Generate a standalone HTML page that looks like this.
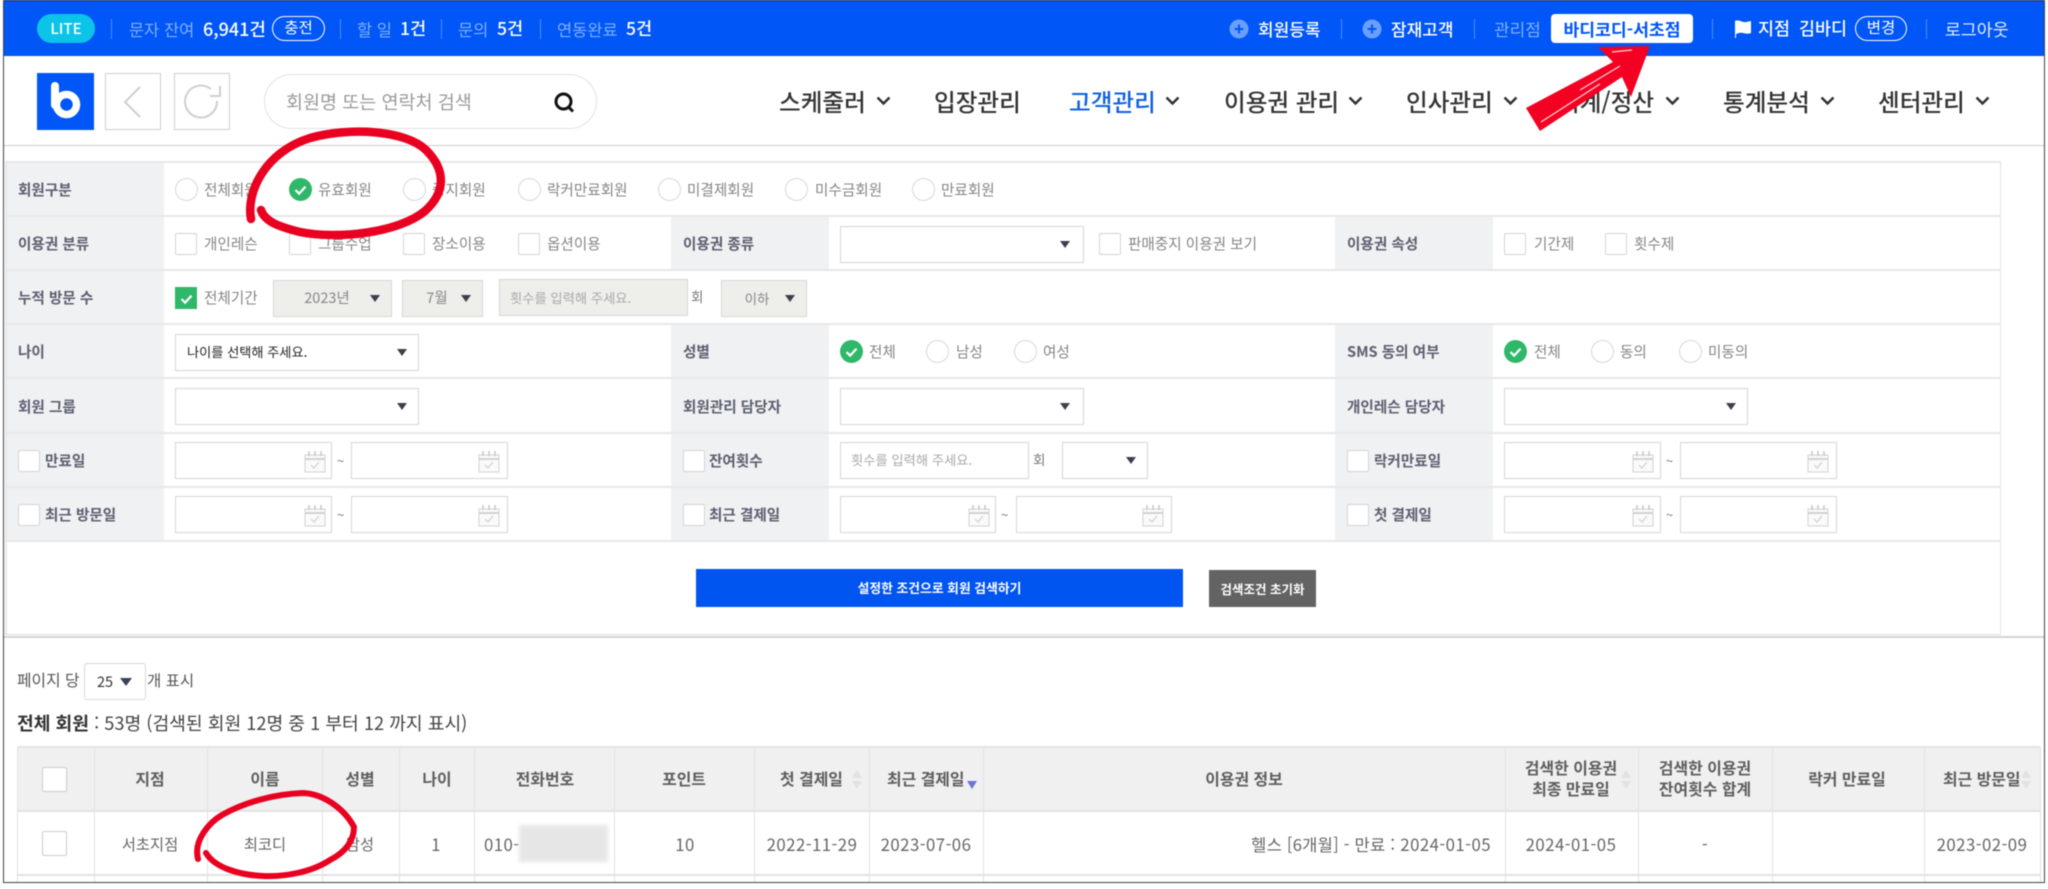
<!DOCTYPE html>
<html lang="ko"><head><meta charset="utf-8"><title>회원 검색</title>
<style>
html,body{margin:0;padding:0;width:2048px;height:889px;overflow:hidden;background:#fff}
*{box-sizing:border-box}
#w{position:absolute;left:0;top:0;width:2048px;height:889px;overflow:hidden;filter:blur(.5px);font-family:"Noto Sans CJK KR","Liberation Sans",sans-serif;color:#666;background:#fff}
#w div,#w span,#w svg{position:absolute}
.t{white-space:nowrap;line-height:24px;margin-top:-12px}
.c{transform:translateX(-50%)}
.bar{font-size:16.5px;color:#7fb0ff}
.wh{color:#fff;font-size:17.6px;font-weight:500}
.sep{width:1px;height:20px;top:19px;background:#4d8cff}
.pill{height:25px;top:16px;border:1.5px solid #fff;border-radius:13px;color:#fff;font-size:15.5px;line-height:21px;text-align:center}
.nav{font-size:23.6px;color:#333;font-weight:500}
.th{background:#f0f1f2}
.hl{height:2px;background:#e8e8e8;left:7px;width:1993px}
.l{font-size:14.6px;font-weight:700;color:#5b5f70;margin-top:-11px}
.v{font-size:14.6px;color:#858585;margin-top:-11px}
.r{width:23px;height:23px;border:1px solid #d8d8d8;border-radius:50%;background:#fff}
.g{width:23px;height:23px;border-radius:50%;background:#2fb869}
.b{width:22px;height:22px;border:1px solid #d4d4d4;border-radius:2px;background:#fff}
.s{height:37px;border:1px solid #d6d6d6;background:#fff}
.d{height:37px;border:1px solid #d6d6d6;background:#eeeeea}
.a{width:0;height:0;border-left:5.5px solid transparent;border-right:5.5px solid transparent;border-top:7px solid #3c404c}
.tv{font-size:15.3px;color:#666}
.th2{font-size:15.9px;font-weight:700;color:#5e5e5e}
.dt{font-size:16.8px;letter-spacing:.45px;color:#666}
.vl{width:1px;background:#e2e2e2;top:747px;height:135px}
.cal{width:22px;height:23px}
.tp{color:#fff;font-size:17px;font-weight:500}
.ch{fill:none;stroke:#333;stroke-width:2.5}
</style></head><body>
<svg width="0" height="0" style="position:absolute"><defs>
<symbol id="cal" viewBox="0 0 22 23"><rect x="1" y="5" width="20" height="17" fill="#fafafa" stroke="#d2d2d2"/><path d="M1 9h20" stroke="#d2d2d2" stroke-width="2"/><path d="M5 1v5M11 1v5M17 1v5" stroke="#c8c8c8" stroke-width="1.5"/><path d="M7 15l3 3 5-6" fill="none" stroke="#d0d0d0" stroke-width="1.2"/></symbol>
<symbol id="ck" viewBox="0 0 23 23"><path d="M6.5 12l3.6 3.6 6.4-7" fill="none" stroke="#fff" stroke-width="2.2"/></symbol>
</defs></svg>
<div id="w">
<!-- top bar -->
<div style="left:3px;top:1px;width:2041px;height:55px;background:#0056f6"></div>
<div style="left:37px;top:14px;width:58px;height:29px;border-radius:15px;background:#0cc4e8;color:#fff;font-size:15px;font-weight:500;line-height:29px;text-align:center">LITE</div>
<div class="sep" style="left:111px"></div>
<span class="t bar" style="left:129px;top:29px">문자 잔여</span>
<span class="t wh" style="left:203px;top:29px;font-size:18px">6,941건</span>
<div class="pill" style="left:272px;width:53px">충전</div>
<div class="sep" style="left:340px"></div>
<span class="t bar" style="left:357px;top:29px">할 일</span>
<span class="t wh" style="left:400px;top:29px">1건</span>
<div class="sep" style="left:441px"></div>
<span class="t bar" style="left:458px;top:29px">문의</span>
<span class="t wh" style="left:497px;top:29px">5건</span>
<div class="sep" style="left:540px"></div>
<span class="t bar" style="left:557px;top:29px">연동완료</span>
<span class="t wh" style="left:626px;top:29px">5건</span>

<svg style="left:1229px;top:19px" width="20" height="20"><circle cx="10" cy="10" r="9.500" fill="#6a9fff"/><path d="M10 5.500v9M5.500 10h9" stroke="#0056f6" stroke-width="2"/></svg>
<span class="t tp" style="left:1258px;top:29px">회원등록</span>
<div class="sep" style="left:1341px"></div>
<svg style="left:1362px;top:19px" width="20" height="20"><circle cx="10" cy="10" r="9.500" fill="#6a9fff"/><path d="M10 5.500v9M5.500 10h9" stroke="#0056f6" stroke-width="2"/></svg>
<span class="t tp" style="left:1391px;top:29px">잠재고객</span>
<div class="sep" style="left:1474px"></div>
<span class="t bar" style="left:1494px;top:29px;font-size:17px">관리점</span>
<div style="left:1551px;top:14px;width:142px;height:29px;background:#fff;border-radius:4px;color:#0056f6;font-size:17.200px;font-weight:700;line-height:29px;text-align:center">바디코디-서초점</div>
<div class="sep" style="left:1712px"></div>
<svg style="left:1734px;top:20px" width="18" height="18"><path d="M1 1C5-1 8 3 12 2l5-1v12c-5 2-8-1-12 0l-3 1v4H1z" fill="#fff"/></svg>
<span class="t tp" style="left:1758px;top:29px;font-size:17.400px">지점</span>
<span class="t tp" style="left:1799px;top:29px;font-size:17.400px">김바디</span>
<div class="pill" style="left:1855px;width:52px">변경</div>
<div class="sep" style="left:1926px"></div>
<span class="t" style="left:1945px;top:29px;color:#fff;font-size:17.300px;opacity:.9">로그아웃</span>

<!-- nav -->
<div style="left:3px;top:145px;width:2041px;height:1px;background:#ccc"></div>
<div style="left:37px;top:73px;width:57px;height:57px;background:#0056f6"></div>
<svg style="left:37px;top:73px" width="57" height="57"><path d="M18 13v19" stroke="#fff" stroke-width="8" stroke-linecap="round"/><circle cx="29.500" cy="31.500" r="10" fill="none" stroke="#fff" stroke-width="7.500"/></svg>
<div style="left:105px;top:73px;width:56px;height:57px;border:1px solid #cfcfcf"></div>
<svg style="left:105px;top:73px" width="56" height="57"><path d="M35 14L20 29l15 15" fill="none" stroke="#cfcfcf" stroke-width="2"/></svg>
<div style="left:174px;top:73px;width:56px;height:57px;border:1px solid #cfcfcf"></div>
<svg style="left:174px;top:73px" width="56" height="57"><path d="M43 28a16 16 0 1 1-6-12" fill="none" stroke="#cfcfcf" stroke-width="2"/><path d="M46 13v10H36" fill="none" stroke="#cfcfcf" stroke-width="2"/></svg>
<div style="left:264px;top:74px;width:333px;height:55px;border:1px solid #e2e2e2;border-radius:28px;background:#fff"></div>
<span class="t" style="left:286px;top:102px;font-size:18.500px;color:#9a9a9a">회원명 또는 연락처 검색</span>
<svg style="left:552px;top:91px" width="24" height="24"><circle cx="11.500" cy="10.500" r="7.500" fill="none" stroke="#111" stroke-width="3"/><path d="M16 15.500l5 5" stroke="#111" stroke-width="3"/></svg>

<span class="t nav" style="left:779px;top:101px">스케줄러</span>
<span class="t nav" style="left:934px;top:101px">입장관리</span>
<span class="t nav" style="left:1069px;top:101px;color:#0f62e0">고객관리</span>
<span class="t nav" style="left:1224px;top:101px">이용권 관리</span>
<span class="t nav" style="left:1406px;top:101px">인사관리</span>
<span class="t nav" style="left:1558px;top:101px">회계/정산</span>
<span class="t nav" style="left:1723px;top:101px">통계분석</span>
<span class="t nav" style="left:1878px;top:101px">센터관리</span>
<svg style="left:876px;top:96px" width="15" height="10"><path class="ch" d="M1.500 1.500L7.500 7.500l6-6"/></svg>
<svg style="left:1165px;top:96px" width="15" height="10"><path class="ch" d="M1.500 1.500L7.500 7.500l6-6"/></svg>
<svg style="left:1348px;top:96px" width="15" height="10"><path class="ch" d="M1.500 1.500L7.500 7.500l6-6"/></svg>
<svg style="left:1503px;top:96px" width="15" height="10"><path class="ch" d="M1.500 1.500L7.500 7.500l6-6"/></svg>
<svg style="left:1665px;top:96px" width="15" height="10"><path class="ch" d="M1.500 1.500L7.500 7.500l6-6"/></svg>
<svg style="left:1820px;top:96px" width="15" height="10"><path class="ch" d="M1.500 1.500L7.500 7.500l6-6"/></svg>
<svg style="left:1975px;top:96px" width="15" height="10"><path class="ch" d="M1.500 1.500L7.500 7.500l6-6"/></svg>

<!-- filter table backgrounds -->
<div class="th" style="left:7px;top:162px;width:157px;height:379px"></div>
<div class="th" style="left:671px;top:216px;width:158px;height:54px"></div>
<div class="th" style="left:1335px;top:216px;width:158px;height:54px"></div>
<div class="th" style="left:671px;top:324px;width:158px;height:217px"></div>
<div class="th" style="left:1335px;top:324px;width:158px;height:217px"></div>
<div class="hl" style="top:161px"></div><div class="hl" style="top:215px"></div><div class="hl" style="top:269px"></div><div class="hl" style="top:323px"></div><div class="hl" style="top:377px"></div><div class="hl" style="top:432px"></div><div class="hl" style="top:486px"></div><div class="hl" style="top:540px"></div>
<div style="left:2000px;top:161px;width:1px;height:473px;background:#e4e4e4"></div>
<div style="left:5px;top:161px;width:2px;height:473px;background:#e8e8e8"></div>
<div style="left:5px;top:634px;width:1996px;height:1px;background:#ddd"></div>
<div style="left:3px;top:636px;width:2041px;height:2px;background:#d2d2d2"></div>

<!-- labels -->
<span class="t l" style="left:18px;top:189px">회원구분</span>
<span class="t l" style="left:18px;top:243px">이용권 분류</span>
<span class="t l" style="left:18px;top:297px">누적 방문 수</span>
<span class="t l" style="left:18px;top:351px">나이</span>
<span class="t l" style="left:18px;top:406px">회원 그룹</span>
<span class="t l" style="left:45px;top:460px">만료일</span>
<span class="t l" style="left:45px;top:514px">최근 방문일</span>
<span class="t l" style="left:683px;top:243px">이용권 종류</span>
<span class="t l" style="left:683px;top:351px">성별</span>
<span class="t l" style="left:683px;top:406px">회원관리 담당자</span>
<span class="t l" style="left:709px;top:460px">잔여횟수</span>
<span class="t l" style="left:709px;top:514px">최근 결제일</span>
<span class="t l" style="left:1347px;top:243px">이용권 속성</span>
<span class="t l" style="left:1347px;top:351px">SMS 동의 여부</span>
<span class="t l" style="left:1347px;top:406px">개인레슨 담당자</span>
<span class="t l" style="left:1374px;top:460px">락커만료일</span>
<span class="t l" style="left:1374px;top:514px">첫 결제일</span>

<!-- row 1 -->
<div class="r" style="left:175px;top:178px"></div><span class="t v" style="left:204px;top:189px">전체회원</span>
<div class="g" style="left:289px;top:178px"></div><svg style="left:289px;top:178px" width="23" height="23"><use href="#ck"/></svg><span class="t v" style="left:318px;top:189px">유효회원</span>
<div class="r" style="left:403px;top:178px"></div><span class="t v" style="left:432px;top:189px">중지회원</span>
<div class="r" style="left:518px;top:178px"></div><span class="t v" style="left:547px;top:189px">락커만료회원</span>
<div class="r" style="left:658px;top:178px"></div><span class="t v" style="left:687px;top:189px">미결제회원</span>
<div class="r" style="left:785px;top:178px"></div><span class="t v" style="left:815px;top:189px">미수금회원</span>
<div class="r" style="left:912px;top:178px"></div><span class="t v" style="left:941px;top:189px">만료회원</span>
<!-- row 2 -->
<div class="b" style="left:175px;top:233px"></div><span class="t v" style="left:204px;top:243px">개인레슨</span>
<div class="b" style="left:289px;top:233px"></div><span class="t v" style="left:318px;top:243px">그룹수업</span>
<div class="b" style="left:403px;top:233px"></div><span class="t v" style="left:432px;top:243px">장소이용</span>
<div class="b" style="left:518px;top:233px"></div><span class="t v" style="left:547px;top:243px">옵션이용</span>
<div class="s" style="left:840px;top:226px;width:244px"></div><div class="a" style="left:1060px;top:241px"></div>
<div class="b" style="left:1099px;top:233px"></div><span class="t v" style="left:1128px;top:243px">판매중지 이용권 보기</span>
<div class="b" style="left:1504px;top:233px"></div><span class="t v" style="left:1534px;top:243px">기간제</span>
<div class="b" style="left:1605px;top:233px"></div><span class="t v" style="left:1634px;top:243px">횟수제</span>
<!-- row 3 -->
<div style="left:175px;top:287px;width:22px;height:22px;background:#2fb869"></div><svg style="left:175px;top:287px" width="23" height="23"><use href="#ck"/></svg>
<span class="t v" style="left:204px;top:297px">전체기간</span>
<div class="d" style="left:273px;top:280px;width:119px"></div><span class="t c" style="left:327px;top:298px;font-size:14.500px;color:#888">2023년</span><div class="a" style="left:370px;top:295px"></div>
<div class="d" style="left:402px;top:280px;width:81px"></div><span class="t c" style="left:437px;top:298px;font-size:14.500px;color:#888">7월</span><div class="a" style="left:461px;top:295px"></div>
<div class="d" style="left:499px;top:279px;width:189px;height:37px"></div><span class="t" style="left:510px;top:298px;font-size:13.300px;color:#a8a8a8">횟수를 입력해 주세요.</span>
<span class="t" style="left:691px;top:296px;font-size:13.500px;color:#777">회</span>
<div class="d" style="left:721px;top:280px;width:86px"></div><span class="t c" style="left:757px;top:298px;font-size:13.500px;color:#888">이하</span><div class="a" style="left:785px;top:295px"></div>
<!-- row 4 -->
<div class="s" style="left:175px;top:334px;width:244px"></div><span class="t" style="left:187px;top:352px;font-size:13.200px;color:#222">나이를 선택해 주세요.</span><div class="a" style="left:397px;top:349px"></div>
<div class="g" style="left:840px;top:340px"></div><svg style="left:840px;top:340px" width="23" height="23"><use href="#ck"/></svg><span class="t v" style="left:869px;top:351px">전체</span>
<div class="r" style="left:926px;top:340px"></div><span class="t v" style="left:956px;top:351px">남성</span>
<div class="r" style="left:1014px;top:340px"></div><span class="t v" style="left:1043px;top:351px">여성</span>
<div class="g" style="left:1504px;top:340px"></div><svg style="left:1504px;top:340px" width="23" height="23"><use href="#ck"/></svg><span class="t v" style="left:1534px;top:351px">전체</span>
<div class="r" style="left:1591px;top:340px"></div><span class="t v" style="left:1620px;top:351px">동의</span>
<div class="r" style="left:1679px;top:340px"></div><span class="t v" style="left:1708px;top:351px">미동의</span>
<!-- row 5 -->
<div class="s" style="left:175px;top:388px;width:244px"></div><div class="a" style="left:397px;top:403px"></div>
<div class="s" style="left:840px;top:388px;width:244px"></div><div class="a" style="left:1060px;top:403px"></div>
<div class="s" style="left:1504px;top:388px;width:244px"></div><div class="a" style="left:1726px;top:403px"></div>
<!-- row 6 -->
<div class="b" style="left:18px;top:450px"></div>
<div class="s" style="left:175px;top:442px;width:157px"></div><svg class="cal" style="left:304px;top:450px"><use href="#cal"/></svg><span class="t" style="left:337px;top:461px;font-size:13px;color:#777">~</span>
<div class="s" style="left:351px;top:442px;width:157px"></div><svg class="cal" style="left:478px;top:450px"><use href="#cal"/></svg>
<div class="b" style="left:683px;top:450px"></div>
<div class="s" style="left:840px;top:442px;width:189px"></div><span class="t" style="left:851px;top:460px;font-size:13.300px;color:#a8a8a8">횟수를 입력해 주세요.</span>
<span class="t" style="left:1033px;top:459px;font-size:13.500px;color:#777">회</span>
<div class="s" style="left:1062px;top:442px;width:86px"></div><div class="a" style="left:1126px;top:457px"></div>
<div class="b" style="left:1347px;top:450px"></div>
<div class="s" style="left:1504px;top:442px;width:157px"></div><svg class="cal" style="left:1632px;top:450px"><use href="#cal"/></svg><span class="t" style="left:1666px;top:461px;font-size:13px;color:#777">~</span>
<div class="s" style="left:1680px;top:442px;width:157px"></div><svg class="cal" style="left:1807px;top:450px"><use href="#cal"/></svg>
<!-- row 7 -->
<div class="b" style="left:18px;top:504px"></div>
<div class="s" style="left:175px;top:496px;width:157px"></div><svg class="cal" style="left:304px;top:504px"><use href="#cal"/></svg><span class="t" style="left:337px;top:515px;font-size:13px;color:#777">~</span>
<div class="s" style="left:351px;top:496px;width:157px"></div><svg class="cal" style="left:478px;top:504px"><use href="#cal"/></svg>
<div class="b" style="left:683px;top:504px"></div>
<div class="s" style="left:840px;top:496px;width:156px"></div><svg class="cal" style="left:968px;top:504px"><use href="#cal"/></svg><span class="t" style="left:1001px;top:515px;font-size:13px;color:#777">~</span>
<div class="s" style="left:1016px;top:496px;width:156px"></div><svg class="cal" style="left:1142px;top:504px"><use href="#cal"/></svg>
<div class="b" style="left:1347px;top:504px"></div>
<div class="s" style="left:1504px;top:496px;width:157px"></div><svg class="cal" style="left:1632px;top:504px"><use href="#cal"/></svg><span class="t" style="left:1666px;top:515px;font-size:13px;color:#777">~</span>
<div class="s" style="left:1680px;top:496px;width:157px"></div><svg class="cal" style="left:1807px;top:504px"><use href="#cal"/></svg>

<!-- buttons -->
<div style="left:696px;top:569px;width:487px;height:38px;background:#0054f0;color:#fff;font-size:12.800px;font-weight:700;line-height:38px;text-align:center">설정한 조건으로 회원 검색하기</div>
<div style="left:1209px;top:570px;width:107px;height:37px;background:#636363;color:#fff;font-size:12.500px;font-weight:700;line-height:37px;text-align:center">검색조건 초기화</div>

<!-- list head -->
<span class="t" style="left:17px;top:680px;font-size:15.800px;color:#555">페이지 당</span>
<div style="left:84px;top:663px;width:62px;height:37px;border:1px solid #d8d8d8;border-radius:3px;background:#fff"></div>
<span class="t" style="left:97px;top:682px;font-size:14.500px;color:#333">25</span><div class="a" style="left:120px;top:678px;border-top-color:#3c4058;border-left-width:6px;border-right-width:6px;border-top-width:8px"></div>
<span class="t" style="left:147px;top:680px;font-size:15.500px;color:#555">개 표시</span>
<span class="t" style="left:17px;top:723px;font-size:18.200px;color:#444"><b style="color:#333">전체 회원</b> : 53명 (검색된 회원 12명 중 1 부터 12 까지 표시)</span>

<!-- table -->
<div style="left:17px;top:747px;width:2023px;height:64px;background:#f0f0f0"></div>
<div style="left:17px;top:746px;width:2023px;height:2px;background:#e4e4e4"></div>
<div style="left:17px;top:810px;width:2023px;height:2px;background:#e2e2e2"></div>
<div style="left:17px;top:874px;width:2023px;height:2px;background:#e2e2e2"></div>
<div class="vl" style="left:17px"></div><div class="vl" style="left:94px"></div><div class="vl" style="left:207px"></div><div class="vl" style="left:322px"></div><div class="vl" style="left:399px"></div><div class="vl" style="left:474px"></div><div class="vl" style="left:614px"></div><div class="vl" style="left:754px"></div><div class="vl" style="left:869px"></div><div class="vl" style="left:983px"></div><div class="vl" style="left:1505px"></div><div class="vl" style="left:1638px"></div><div class="vl" style="left:1772px"></div><div class="vl" style="left:1924px"></div><div class="vl" style="left:2040px"></div>
<div style="left:42px;top:767px;width:25px;height:25px;border:1px solid #ccc;border-radius:2px;background:#fff"></div>
<div style="left:42px;top:831px;width:25px;height:25px;border:1px solid #ccc;border-radius:2px;background:#fff"></div>
<span class="t c th2" style="left:150px;top:779px">지점</span>
<span class="t c th2" style="left:265px;top:779px">이름</span>
<span class="t c th2" style="left:360px;top:779px">성별</span>
<span class="t c th2" style="left:437px;top:779px">나이</span>
<span class="t c th2" style="left:545px;top:779px">전화번호</span>
<span class="t c th2" style="left:684px;top:779px">포인트</span>
<span class="t th2" style="left:780px;top:779px">첫 결제일</span>
<span class="t th2" style="left:887px;top:779px">최근 결제일</span>
<span class="t c th2" style="left:1244px;top:779px">이용권 정보</span>
<span class="t c th2" style="left:1571px;top:768px">검색한 이용권</span>
<span class="t c th2" style="left:1571px;top:789px">최종 만료일</span>
<span class="t c th2" style="left:1705px;top:768px">검색한 이용권</span>
<span class="t c th2" style="left:1705px;top:789px">잔여횟수 합계</span>
<span class="t c th2" style="left:1847px;top:779px">락커 만료일</span>
<span class="t th2" style="left:1943px;top:779px">최근 방문일</span>
<svg style="left:851px;top:770px" width="12" height="19"><path d="M6 0l5 8H1zM6 19l5-8H1z" fill="#e2e2e2"/></svg>
<svg style="left:966px;top:780px" width="12" height="10"><path d="M1 1h10L6 9z" fill="#6f72d8"/></svg>
<svg style="left:1620px;top:770px" width="12" height="19"><path d="M6 0l5 8H1zM6 19l5-8H1z" fill="#e2e2e2"/></svg>
<svg style="left:2020px;top:770px" width="12" height="19"><path d="M6 0l5 8H1zM6 19l5-8H1z" fill="#e2e2e2"/></svg>

<span class="t c tv" style="left:150px;top:844px">서초지점</span>
<span class="t c tv" style="left:265px;top:844px">최코디</span>
<span class="t c tv" style="left:360px;top:844px">남성</span>
<span class="t c dt" style="left:436px;top:844px">1</span>
<span class="t dt" style="left:484px;top:844px">010-</span>
<div style="left:519px;top:825px;width:89px;height:37px;background:#e6e6e6;filter:blur(2px)"></div>
<span class="t c dt" style="left:685px;top:844px">10</span>
<span class="t c dt" style="left:812px;top:844px">2022-11-29</span>
<span class="t c dt" style="left:926px;top:844px">2023-07-06</span>
<span class="t dt" style="right:557px;top:844px"><span style="position:static;font-size:16.600px;letter-spacing:.2px">헬스 [6개월] - 만료 :</span> 2024-01-05</span>
<span class="t c dt" style="left:1571px;top:844px">2024-01-05</span>
<span class="t c dt" style="left:1705px;top:844px">-</span>
<span class="t c dt" style="left:1982px;top:844px">2023-02-09</span>

<!-- frame lines -->
<div style="left:0;top:882px;width:2048px;height:7px;background:#fff"></div>
<div style="left:2045px;top:0;width:3px;height:889px;background:#fff"></div>
<div style="left:0;top:0;width:3px;height:889px;background:#fff"></div>
<div style="left:3px;top:0;width:2042px;height:1px;background:#0d1d5a"></div>
<div style="left:3px;top:0;width:1px;height:882px;background:#444"></div>
<div style="left:2044px;top:0;width:1px;height:882px;background:#444"></div>
<div style="left:3px;top:882px;width:2042px;height:1px;background:#444"></div>

<!-- annotations -->
<svg style="left:0;top:0" width="2048" height="889">
<path d="M251 219C246 192 265 152 310 138C350 127 405 130 426 150C446 170 446 192 425 211C400 232 340 240 300 232C280 227 265 222 261 210" fill="none" stroke="#e90020" stroke-width="8.500" stroke-linecap="round"/>
<path d="M198 859C193 840 210 822 222 815C245 802 275 794 303 793C325 794 345 810 354 827C354 840 346 852 330 860C312 872 285 877 263 876C240 875 215 868 206 853" fill="none" stroke="#e90020" stroke-width="6" stroke-linecap="round"/>
<path d="M1650 46L1598 47L1613 62L1526 108L1540 131L1622 77L1631 97Z" fill="#f30022"/>
<path d="M1541 122L1600 84M1580 90L1620 66M1612 52L1632 50" stroke="#fff" stroke-width="1.200" opacity=".85"/>
</svg>
</div>
</body></html>
